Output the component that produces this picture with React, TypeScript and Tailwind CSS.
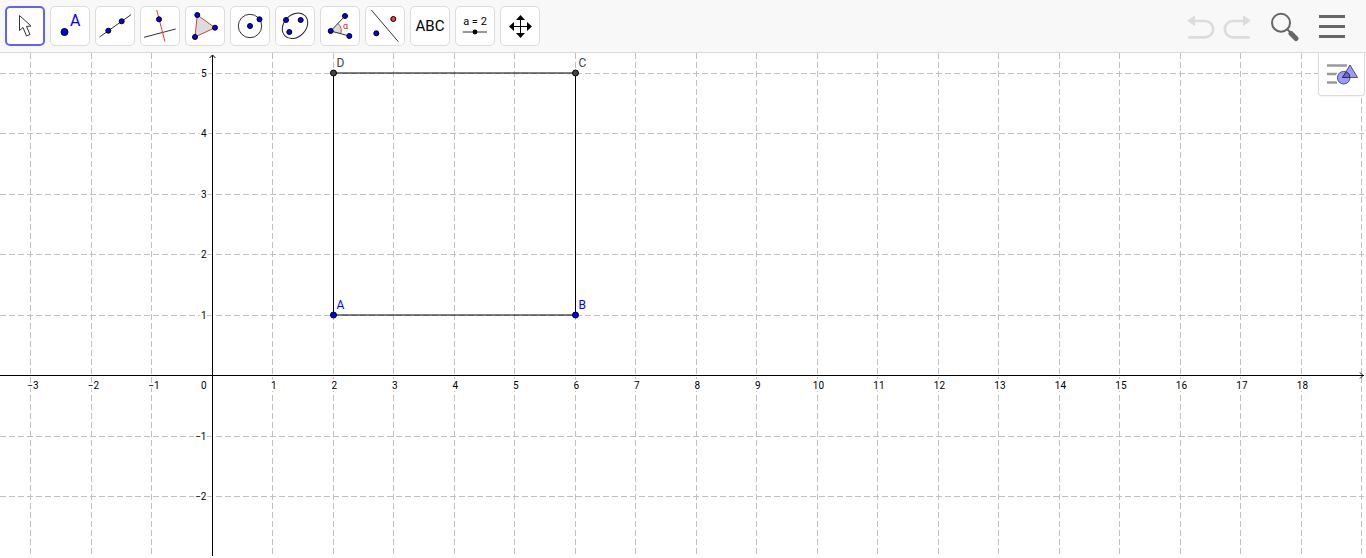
import { useLayoutEffect, useRef, useState } from "react";
import type { ReactNode } from "react";

const UNIT = 60.5;
const ORIGIN_X = 212.4;
const ORIGIN_Y = 322.6;

function Dot({ x, y, r = 2.5, fill = "#0000ff" }: any) {
    return <circle cx={x} cy={y} r={r} fill={fill} stroke="#000" strokeWidth={1} />
}

const tools: { name: string, icon: ReactNode }[] = [
    {
        name: "Move",
        icon: <path d="M10.5 5.5V20.5L14 17.5L17.5 26L21 24.5L17.5 16.5L22 16Z" fill="#fff" stroke="#333" />,
    },
    {
        name: "Point",
        icon: <>
            <Dot x={10.5} y={22} r={3.5} />
            <text x={16} y={16} fontSize={16} fill="#0000ff">A</text>
        </>,
    },
    {
        name: "Line",
        icon: <>
            <path d="M0.5 27L32 4.7" stroke="#333" />
            <Dot x={9.3} y={20.7} />
            <Dot x={22.7} y={11.3} />
        </>,
    },
    {
        name: "Perpendicular Line",
        icon: <>
            <path d="M0 27.3L31.7 19" stroke="#333" />
            <path d="M12.7 0L21 31.7" stroke="#ff3030" />
            <Dot x={15} y={9.3} />
        </>,
    },
    {
        name: "Polygon",
        icon: <>
            <path d="M8.3 5L26 17.7L6 27Z" fill="#dcdcdc" stroke="#d0452f" />
            <Dot x={8.3} y={5} />
            <Dot x={26} y={17.7} />
            <Dot x={6} y={27} />
        </>,
    },
    {
        name: "Circle with Center through Point",
        icon: <>
            <circle cx={16} cy={16} r={11.7} fill="none" stroke="#333" />
            <Dot x={16} y={16} />
            <Dot x={25.5} y={9.3} />
        </>,
    },
    {
        name: "Ellipse",
        icon: <>
            <ellipse cx={16} cy={15.8} rx={14.2} ry={11} transform="rotate(-45 16 15.8)" fill="none" stroke="#222" />
            <Dot x={7} y={10} />
            <Dot x={21.7} y={10} />
            <Dot x={10.3} y={22} />
        </>,
    },
    {
        name: "Angle",
        icon: <>
            <path d="M6.7 21L14 13.4A10.5 10.5 0 0 1 16.8 23.7Z" fill="#dcdcdc" />
            <path d="M14 13.4A10.5 10.5 0 0 1 16.8 23.7" fill="none" stroke="#e04040" />
            <path d="M21 6L6.7 21L25.3 26" fill="none" stroke="#333" />
            <text x={19} y={19} fontSize={9} fill="#e02020">α</text>
            <Dot x={6.7} y={21} />
            <Dot x={21} y={6} />
            <Dot x={25.3} y={26} />
        </>,
    },
    {
        name: "Reflect about Line",
        icon: <>
            <path d="M2.3 0L29.3 31.7" stroke="#333" />
            <Dot x={24.3} y={9} fill="#ff3a3a" />
            <Dot x={7.3} y={23.3} />
        </>,
    },
    {
        name: "Text",
        icon: <text x={16} y={21} fontSize={15} textAnchor="middle">ABC</text>,
    },
    {
        name: "Slider",
        icon: <>
            <text x={16} y={15} fontSize={11} textAnchor="middle">a = 2</text>
            <path d="M3.7 22H28" stroke="#333" />
            <circle cx={16} cy={22} r={2.4} />
        </>,
    },
    {
        name: "Move Graphics View",
        icon: <>
            <path d="M16.5 8V25M8 16.5H25" stroke="#000" />
            <path d="M16.5 5L21 10H12ZM16.5 28L21 23H12ZM5 16.5L10 12V21ZM28 16.5L23 12V21Z" />
        </>,
    },
]

function Toolbar() {
    const [ selected, setSelected ] = useState("Move");

    return (
        <header className="flex items-center justify-between h-[53px] pl-[5px] pr-[21px] bg-[#f8f8f8] border-b border-[#d9d9d9]">
            <div className="flex gap-[5px]">
                {tools.map(tool => (
                    <button
                        key={tool.name}
                        type="button"
                        aria-label={tool.name}
                        onClick={() => setSelected(tool.name)}
                        className={`flex items-center justify-center size-10 rounded-[5px] bg-white
                            ${selected === tool.name ? "border-2 border-[#6161ff]" : "border border-[#dcdcdc]"}`
                        }
                    >
                        <svg viewBox="0 0 32 32" className="size-8 shrink-0">{tool.icon}</svg>
                    </button>
                ))}
            </div>

            <div className="flex items-center gap-5">
                <div className="flex gap-2">
                    <button type="button" aria-label="Undo">
                        <UndoIcon />
                    </button>
                    <button type="button" aria-label="Redo" className="-scale-x-100">
                        <UndoIcon />
                    </button>
                </div>
                <button type="button" aria-label="Search">
                    <svg viewBox="0 0 28 32" className="w-7 h-8" fill="none" stroke="#666">
                        <circle cx={10} cy={12.7} r={9} strokeWidth={2} />
                        <path d="M16.5 19.5L20 23" strokeWidth={2} />
                        <path d="M20 23.5L25 28.5" strokeWidth={5} strokeLinecap="round" />
                    </svg>
                </button>
                <button type="button" aria-label="Menu">
                    <svg viewBox="0 0 26 32" className="w-[26px] h-8" stroke="#666" strokeWidth={3}>
                        <path d="M0 6.5H26M0 16.5H26M0 26.5H26" />
                    </svg>
                </button>
            </div>
        </header>
    )
}

function UndoIcon() {
    return (
        <svg viewBox="0 0 28 32" className="w-7 h-8">
            <path d="M0 10.8L8 5.3V16.3Z" fill="#dcdcdc" />
            <path d="M7 11H18A8 8 0 0 1 18 27.3H1.3" fill="none" stroke="#dcdcdc" strokeWidth={2.7} />
        </svg>
    )
}

function format(n: number) {
    return n < 0 ? `−${-n}` : `${n}`;
}

// screen position of a whole number on the axis, centred on a pixel
function snap(value: number) {
    return Math.floor(value) + 0.5;
}

function range(from: number, to: number) {
    return Array.from({ length: to - from + 1 }, (_, i) => from + i);
}

const points = [
    { name: "A", x: 2, y: 1, free: true },
    { name: "B", x: 6, y: 1, free: true },
    { name: "C", x: 6, y: 5, free: false },
    { name: "D", x: 2, y: 5, free: false },
]

function Graph() {
    const ref = useRef<HTMLDivElement>(null);
    const [ size, setSize ] = useState({ width: 0, height: 0 });

    useLayoutEffect(() => {
        const measure = () => {
            if (ref.current) {
                setSize({ width: ref.current.clientWidth, height: ref.current.clientHeight });
            }
        };
        measure();
        window.addEventListener("resize", measure);
        return () => window.removeEventListener("resize", measure);
    }, []);

    const { width, height } = size;
    const toX = (n: number) => ORIGIN_X + n * UNIT;
    const toY = (n: number) => ORIGIN_Y - n * UNIT;
    const xs = range(-3, Math.max(0, Math.floor((width - ORIGIN_X) / UNIT)));
    const ys = range(-Math.max(0, Math.floor((height - ORIGIN_Y) / UNIT)), 5);
    const axisX = snap(ORIGIN_X);
    const axisY = snap(ORIGIN_Y);
    const corners = points.map(p => `${snap(toX(p.x))},${Math.round(toY(p.y))}`).join(" ");

    return (
        <div ref={ref} className="flex-1 min-h-0 overflow-hidden">
            <svg width={width} height={height} className="block">
                <g stroke="#c0c0c0" strokeDasharray="6 3">
                    {xs.filter(n => n !== 0).map(n => (
                        <line key={n} x1={snap(toX(n))} x2={snap(toX(n))} y1={0} y2={height} />
                    ))}
                    {ys.filter(n => n !== 0).map(n => (
                        <line key={n} x1={0} x2={width} y1={snap(toY(n))} y2={snap(toY(n))} />
                    ))}
                </g>

                <g fontSize={10} stroke="#fff" strokeWidth={4} className="[paint-order:stroke]">
                    {xs.filter(n => n !== 0 && toX(n) < width - 10).map(n => (
                        <text key={n} x={toX(n) + (n < 0 ? 2 : 1)} y={axisY + 13} textAnchor="middle">{format(n)}</text>
                    ))}
                    {ys.filter(n => n !== 0).map(n => (
                        <text key={n} x={axisX - 6} y={snap(toY(n)) + 3} textAnchor="end">{format(n)}</text>
                    ))}
                    <text x={axisX - 6} y={axisY + 13} textAnchor="end">0</text>
                </g>

                <g stroke="#000" fill="none">
                    <path d={`M0 ${axisY}H${width}M${axisX} 2V${height}`} />
                    <path d={`M${axisX - 3} 5L${axisX} 2L${axisX + 3} 5`} />
                    <path d={`M${width - 4} ${axisY - 3}L${width - 1} ${axisY}L${width - 4} ${axisY + 3}`} />
                    <polygon points={corners} />
                </g>

                {points.map(p => (
                    <g key={p.name}>
                        <Dot x={snap(toX(p.x))} y={Math.round(toY(p.y))} r={3} fill={p.free ? "#0000ff" : "#444"} />
                        <text
                            x={snap(toX(p.x)) + 3}
                            y={Math.round(toY(p.y)) - 6}
                            fontSize={12}
                            fill={p.free ? "#0000ff" : "#444"}
                        >
                            {p.name}
                        </text>
                    </g>
                ))}
            </svg>
        </div>
    )
}

function StyleBarButton() {
    return (
        <button
            type="button"
            aria-label="Toggle style bar"
            className="absolute top-0 -right-px w-[47px] h-[43px] rounded-b bg-white border border-t-0 border-[#dcdcdc] shadow-xs"
        >
            <svg viewBox="0 0 45 42" className="w-full h-full">
                <path d="M8 12.5H28M8 21H18M8 29.5H18" stroke="#999" strokeWidth={2.5} />
                <circle cx={24.7} cy={24.7} r={8} fill="#fff" />
                <path d="M30.7 9L41 26H21Z" fill="#fff" />
                <circle cx={24.7} cy={24.7} r={6.3} fill="#9999ff" stroke="#555" />
                <path d="M31 12L38.5 24.5H23.5Z" fill="#9999ff" stroke="#555" />
                <path d="M27.4 18.7A6.3 6.3 0 0 1 31 24.5H23.5Z" fill="#6161ff" stroke="#333" />
            </svg>
        </button>
    )
}

function App() {
    return (
        <div className="flex flex-col h-screen bg-white text-black font-['Roboto','Noto_Sans',sans-serif]">
            <Toolbar />
            <main className="relative flex flex-col flex-1 min-h-0 mr-0.5 mb-0.5">
                <Graph />
                <StyleBarButton />
            </main>
        </div>
    )
}

export default App
